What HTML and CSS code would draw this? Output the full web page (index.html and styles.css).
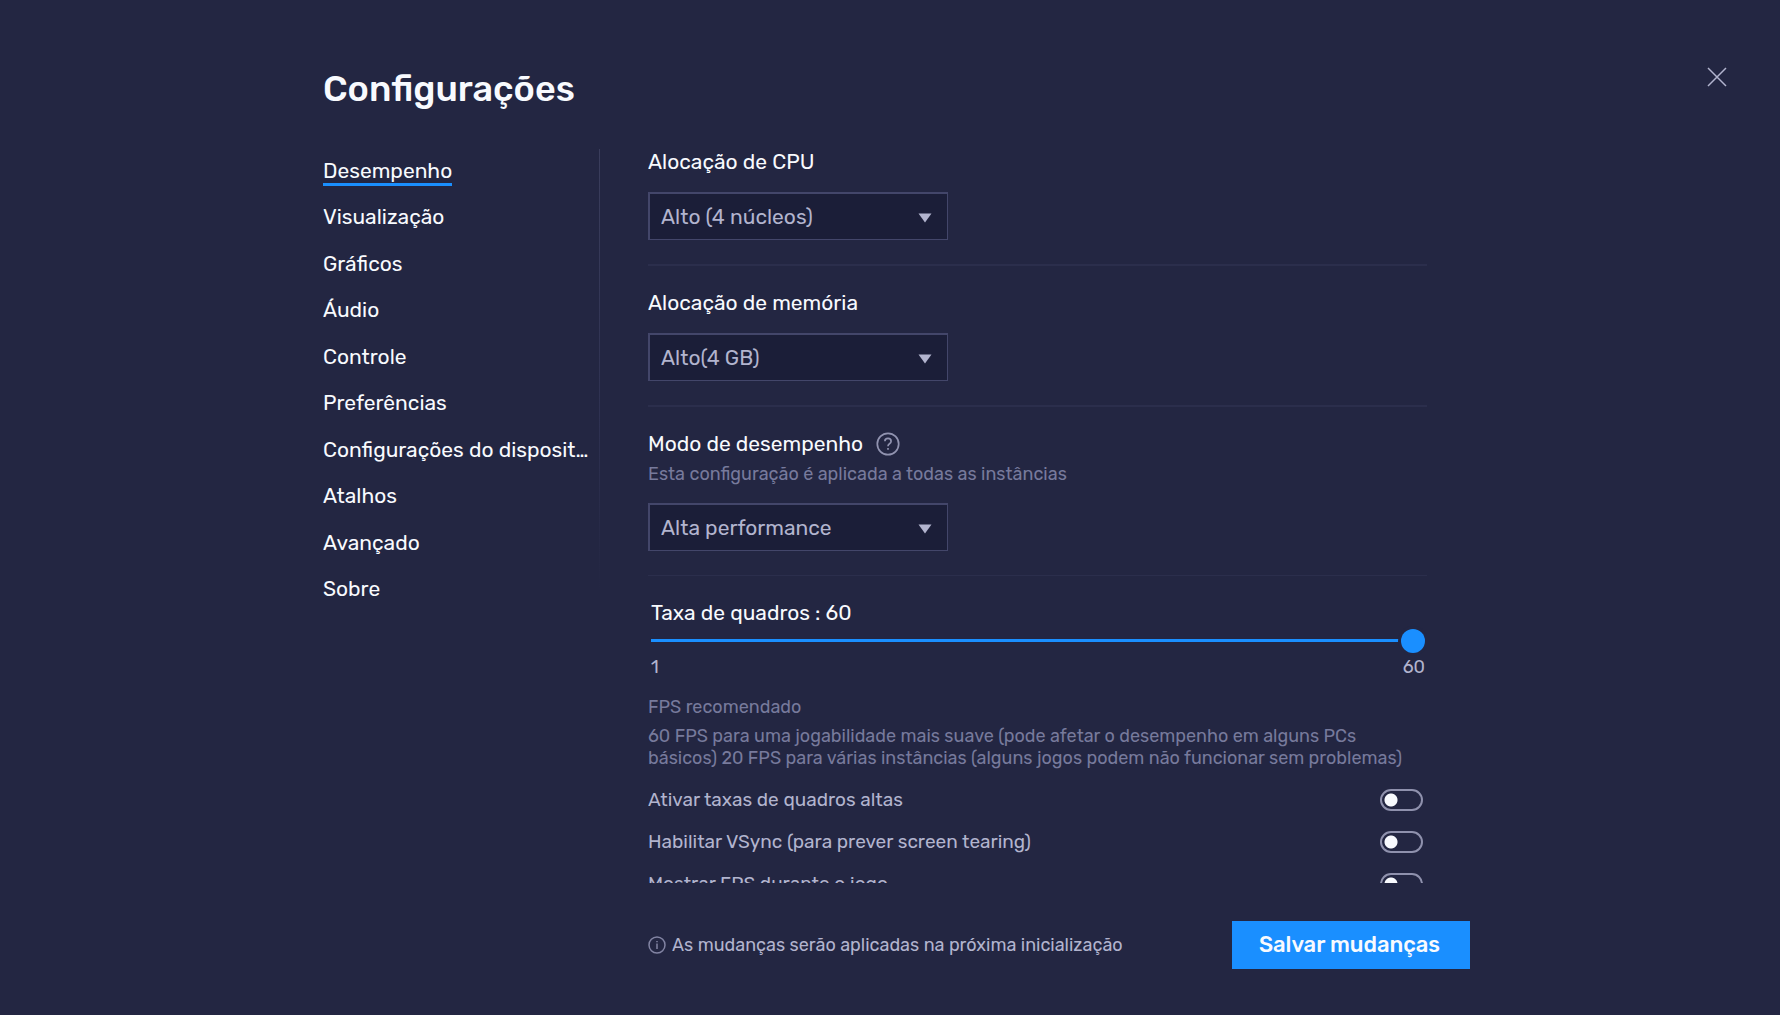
FILE: index.html
```html
<!DOCTYPE html>
<html lang="pt-BR">
<head>
<meta charset="utf-8">
<meta name="viewport" content="width=device-width, initial-scale=1">
<title>Configurações</title>
<link rel="stylesheet" href="styles.css">
</head>
<body>
<div class="page">
  <header class="header">
    <h1 class="title">Configurações</h1>
    <button class="close" type="button" aria-label="Fechar">
      <svg width="20" height="20" viewBox="0 0 20 20" fill="none" stroke="currentColor" stroke-width="1.5"><path d="M1 1l18 18M19 1L1 19"/></svg>
    </button>
  </header>
  <div class="body">
    <nav class="nav">
      <ul class="nav-list">
        <li><a class="nav-link active" href="#desempenho">Desempenho</a></li>
        <li><a class="nav-link" href="#visualizacao">Visualização</a></li>
        <li><a class="nav-link" href="#graficos">Gráficos</a></li>
        <li><a class="nav-link" href="#audio">Áudio</a></li>
        <li><a class="nav-link" href="#controle">Controle</a></li>
        <li><a class="nav-link" href="#preferencias">Preferências</a></li>
        <li><a class="nav-link" href="#dispositivo">Configurações do disposit…</a></li>
        <li><a class="nav-link" href="#atalhos">Atalhos</a></li>
        <li><a class="nav-link" href="#avancado">Avançado</a></li>
        <li><a class="nav-link" href="#sobre">Sobre</a></li>
      </ul>
    </nav>
    <main class="panel">
      <section class="group">
        <label class="label" for="cpu">Alocação de CPU</label>
        <div class="select">
          <select id="cpu"><option>Alto (4 núcleos)</option></select>
          <svg class="arrow" width="14" height="10" viewBox="0 0 14 10"><path d="M0.500 0.500h13L7 9.500z" fill="currentColor"/></svg>
        </div>
      </section>
      <section class="group">
        <label class="label" for="memory">Alocação de memória</label>
        <div class="select">
          <select id="memory"><option>Alto(4 GB)</option></select>
          <svg class="arrow" width="14" height="10" viewBox="0 0 14 10"><path d="M0.500 0.500h13L7 9.500z" fill="currentColor"/></svg>
        </div>
      </section>
      <section class="group group-last">
        <div class="label-row">
          <label class="label" for="mode">Modo de desempenho</label>
          <button class="help" type="button" aria-label="Ajuda">
            <svg width="24" height="24" viewBox="0 0 24 24" fill="none" stroke="currentColor" stroke-width="1.700"><circle cx="12" cy="12" r="10.700"/><path d="M8.900 9.300C8.900 7.500 10.200 6.400 12 6.400s3.100 1.100 3.100 2.800c0 1.300-.7 1.900-1.600 2.500-1 .7-1.500 1.100-1.500 2.500"/><path d="M12 15.900v1.900"/></svg>
          </button>
        </div>
        <p class="hint">Esta configuração é aplicada a todas as instâncias</p>
        <div class="select">
          <select id="mode"><option>Alta performance</option></select>
          <svg class="arrow" width="14" height="10" viewBox="0 0 14 10"><path d="M0.500 0.500h13L7 9.500z" fill="currentColor"/></svg>
        </div>
      </section>
      <section class="frames">
        <div class="slider">
          <label class="label" for="fps">Taxa de quadros : 60</label>
          <input id="fps" class="range" type="range" min="1" max="60" value="60">
          <div class="scale"><span>1</span><span>60</span></div>
        </div>
        <h2 class="note-title">FPS recomendado</h2>
        <p class="note">60 FPS para uma jogabilidade mais suave (pode afetar o desempenho em alguns PCs<br>básicos) 20 FPS para várias instâncias (alguns jogos podem não funcionar sem problemas)</p>
        <div class="option"><label for="high">Ativar taxas de quadros altas</label><input id="high" class="toggle" type="checkbox" role="switch"></div>
        <div class="option"><label for="vsync">Habilitar VSync (para prever screen tearing)</label><input id="vsync" class="toggle" type="checkbox" role="switch"></div>
        <div class="option"><label for="show">Mostrar FPS durante o jogo</label><input id="show" class="toggle" type="checkbox" role="switch"></div>
      </section>
    </main>
  </div>
  <footer class="footer">
    <p class="notice">
      <svg width="18" height="18" viewBox="0 0 18 18" fill="none" stroke="currentColor" stroke-width="1.500"><circle cx="9" cy="9" r="8"/><path d="M9 7.500v5.500M9 5v1.300"/></svg>
      As mudanças serão aplicadas na próxima inicialização
    </p>
    <button class="save" type="button">Salvar mudanças</button>
  </footer>
</div>
</body>
</html>
```
FILE: styles.css
```css
:root {
  --bg: #232642;
  --field: #1b1e38;
  --border: #43466a;
  --line: #2b2e4c;
  --blue: #1a8fff;
  --text: #f8fafe;
  --soft: #b2b4ce;
  --muted: #777a9c;
}

* {
  box-sizing: border-box;
}

body {
  margin: 0;
  background: var(--bg);
  color: var(--text);
  font-family: Rubik, Roboto, sans-serif;
  font-size: 21px;
  line-height: 26px;
}

h1, h2, p {
  margin: 0;
  font-weight: 400;
}

button, select, input {
  margin: 0;
  padding: 0;
  border: 0;
  background: none;
  color: inherit;
  font: inherit;
}

svg {
  display: block;
}

.page {
  display: flex;
  flex-direction: column;
  height: 100vh;
  padding: 64px 53px 46px 323px;
}

.header {
  display: flex;
  justify-content: space-between;
  align-items: flex-start;
  height: 85px;
}

.title {
  font-size: 36px;
  font-weight: 500;
  line-height: 50px;
}

.close {
  padding: 3px 0;
  color: var(--soft);
}

.body {
  display: grid;
  grid-template-columns: 277px minmax(0, 1fr);
  gap: 48px;
  flex: 1;
  min-height: 0;
  padding-right: 300px;
}

.nav {
  padding-top: 8px;
  border-right: 1px solid;
  border-image: linear-gradient(#3a3d5c, #2d3050 280px, #232642 440px) 1;
}

.nav-list {
  display: flex;
  flex-direction: column;
  justify-content: space-between;
  min-height: 447px;
  margin: 0;
  padding: 0;
  list-style: none;
}

.nav-link {
  display: inline-block;
  height: 29px;
  line-height: 28px;
  color: inherit;
  text-decoration: none;
  vertical-align: top;
  white-space: nowrap;
}

.nav-link.active {
  border-bottom: 3px solid var(--blue);
}

.panel {
  overflow: hidden auto;
  scrollbar-width: none;
}

.group {
  padding-bottom: 24px;
  margin-bottom: 24px;
  border-bottom: 2px solid var(--line);
}

.group-last {
  border-bottom-width: 1px;
}

.label {
  display: block;
}

.select {
  display: grid;
  align-items: center;
  width: 300px;
  margin-top: 17px;
}

.hint + .select {
  margin-top: 18px;
}

.select select,
.arrow {
  grid-area: 1 / 1;
}

.select select {
  appearance: none;
  height: 48px;
  padding-left: 11px;
  border: solid var(--border);
  border-width: 2px 1px 1px 2px;
  background: var(--field);
  color: var(--soft);
}

.arrow {
  justify-self: end;
  margin: 3px 16px 0 0;
  color: var(--soft);
  pointer-events: none;
}

.label-row {
  display: flex;
  align-items: center;
  gap: 13px;
}

.help {
  color: #9193b0;
}

.hint,
.note-title,
.note {
  color: var(--muted);
  font-size: 18px;
  line-height: 22px;
}

.hint {
  margin-top: 6px;
}

.slider {
  padding: 0 2px 0 3px;
}

.range {
  display: block;
  appearance: none;
  width: 100%;
  height: 24px;
  margin-top: 3px;
  background: linear-gradient(var(--blue), var(--blue)) 0 10px / 100% 3px no-repeat;
}

.range::-webkit-slider-thumb {
  appearance: none;
  width: 24px;
  height: 24px;
  border-radius: 50%;
  background: var(--blue);
  box-shadow: 0 0 0 3px var(--bg);
}

.scale {
  display: flex;
  justify-content: space-between;
  margin-top: 3px;
  color: var(--soft);
  font-size: 18px;
  line-height: 22px;
}

.note-title {
  margin-top: 18px;
}

.note {
  margin: 7px 0 20px;
}

.option {
  display: flex;
  justify-content: space-between;
  align-items: center;
  height: 22px;
  margin-bottom: 20px;
  padding-right: 4px;
  color: var(--soft);
  font-size: 19px;
}

.toggle {
  appearance: none;
  width: 43px;
  height: 22px;
  border: 2px solid #8f91ad;
  border-radius: 11px;
  background: radial-gradient(circle at 9px 9px, var(--text) 6px, transparent 7px);
}

.footer {
  display: flex;
  justify-content: space-between;
  align-items: center;
  padding: 38px 257px 0 325px;
}

.notice {
  display: flex;
  align-items: center;
  gap: 6px;
  color: var(--soft);
  font-size: 18px;
}

.notice svg {
  color: #8284a3;
}

.save {
  height: 48px;
  padding: 0 30px 0 27px;
  background: var(--blue);
  font-size: 22px;
  font-weight: 500;
}
```
